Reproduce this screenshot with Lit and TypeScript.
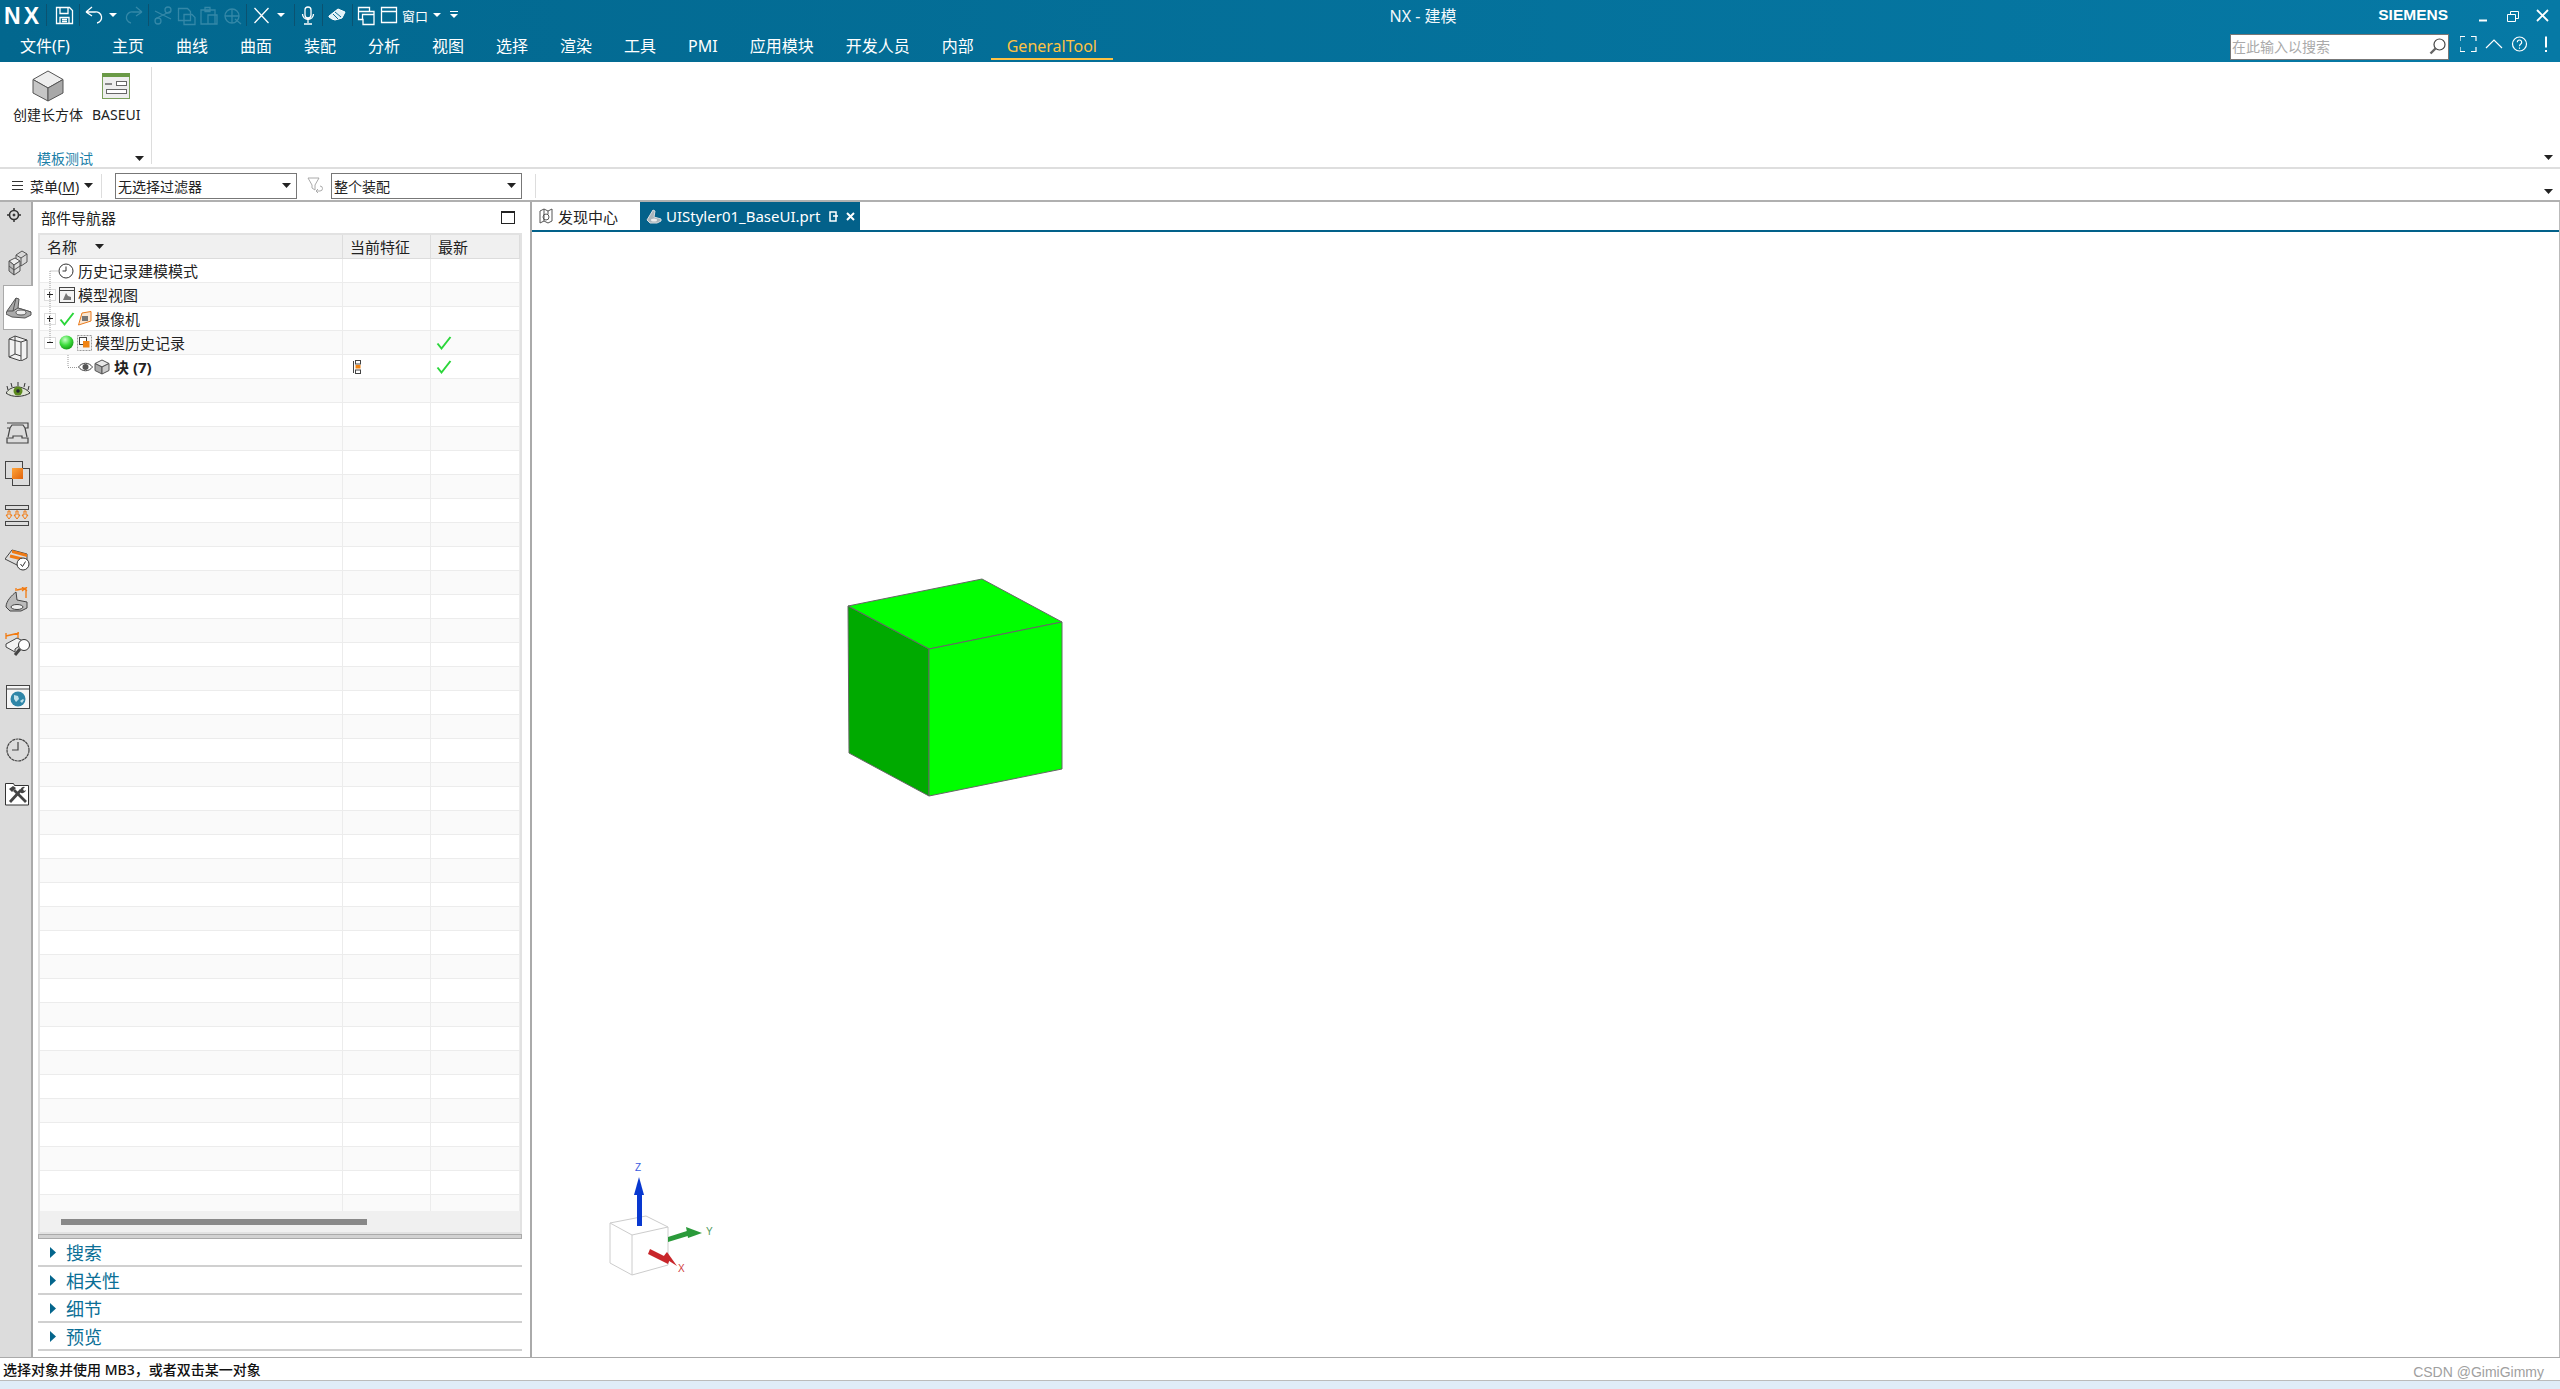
import { LitElement, html, css } from 'lit';
import { customElement } from 'lit/decorators.js';

const MENU = ['主页', '曲线', '曲面', '装配', '分析', '视图', '选择', '渲染', '工具', 'PMI', '应用模块', '开发人员', '内部'];
const SECTIONS = ['搜索', '相关性', '细节', '预览'];
const EMPTY_ROWS = Array.from({ length: 35 });

const arrow = html`<svg class="caret" width="9" height="5" viewBox="0 0 9 5"><path d="M0 0h9L4.500 5z" fill="currentColor"/></svg>`;
const tick = html`<svg class="ico" width="16" height="16" viewBox="0 0 16 16"><path d="M1.500 8.500l4 5L14.500 2" fill="none" stroke="#2bd63a" stroke-width="2"/></svg>`;

const quickBar = html`<svg width="470" height="34" viewBox="0 0 470 34">
  <text x="4" y="24" font-family="Liberation Sans" font-weight="700" font-size="23" fill="#fff" textLength="35">NX</text>
  <g stroke="#0b5270" stroke-width="1">
    <path d="M46.500 4v22M79.500 4v22M148.500 4v22M246.500 4v22M294.500 4v22M322.500 4v22M352.500 4v22"/>
  </g>
  <g fill="none" stroke="#fff" stroke-width="1.300">
    <path d="M56.500 7.500h13l3 3v13h-16zM60 7.500v6h8v-6M60 23.500v-6h9v6M62 19.500h5M62 21.500h5"/>
    <path d="M86 12l6-5M86 12l6 4M86 12h9a5.500 5.500 0 0 1 2 11"/>
    <path d="M254.500 8l14 15M268.500 8l-14 15"/>
    <path d="M305 10a3 3 0 0 1 6 0v5a3 3 0 0 1-6 0zM302.500 14a5.500 5.500 0 0 0 11 0M308 20v3M304 24h8"/>
    <path d="M358.500 7.500h11v4h4.500v13h-11v-5h-4.500zM358.500 11.500h11M362.500 19.500v-5h11.500"/>
    <path d="M381.500 7.500h15v15h-15zM381.500 11.500h15"/>
  </g>
  <path d="M329 16l9-7 7 3-3 6-7 2-3-1-3-2z" fill="#dff1f7" stroke="#fff"/>
  <path d="M335 12l6 5M333 14l5 5" stroke="#0b6a90" stroke-width="1"/>
  <g fill="none" stroke="#3488a8" stroke-width="1.300">
    <path d="M142 12l-6-5M142 12l-6 4M142 12h-9a5.500 5.500 0 0 0-2 11"/>
    <path d="M155 11l16 8M171 11l-16 8"/><circle cx="158" cy="21" r="3"/><circle cx="168" cy="10" r="3"/>
    <path d="M178.500 8.500h9l3 3v9h-12zM184 14.500h8l3 3v7h-11z"/>
    <path d="M204 10h11v14h-14v-14zM205 7.500h5v4h-5zM208 15h9v9h-9z"/>
    <circle cx="232" cy="16" r="7"/><path d="M225 16h14M232 9v14M235 19l6 5"/>
  </g>
  <text x="402" y="21" font-family="Noto Sans CJK SC" font-size="13" fill="#fff">窗口</text>
  <g fill="#fff">
    <path d="M109 13h8l-4 4zM277 13h8l-4 4zM433 13h8l-4 4zM450 14h8l-4 4zM450 11h8v1h-8z"/>
  </g>
</svg>`;

const winButtons = html`<svg width="70" height="24" viewBox="0 0 70 24">
  <g fill="none" stroke="#fff">
    <path d="M0 19.500h8" stroke-width="2"/>
    <path d="M28.500 13.500h8v7h-8zM31.500 13v-2.500h8v7h-3"/>
    <path d="M58 9l11 11M69 9l-11 11" stroke-width="1.800"/>
  </g>
</svg>`;

const searchIcons = html`<svg width="92" height="22" viewBox="0 0 92 22">
  <g fill="none" stroke="#fff" stroke-width="1.200">
    <path d="M0 5V.5h5M11 .5h5V5M16 11v4.500h-5M5 15.500H0V11"/>
    <path d="M26 12l8-8 8 8"/>
    <circle cx="59.500" cy="8" r="7"/>
    <path d="M57.300 6.200a2.200 2.200 0 1 1 3.500 1.800c-1 .7-1.300 1-1.300 2.200M59.500 11.500v1.200"/>
    <path d="M86 .5v11M86 14v2" stroke-width="2"/>
  </g>
</svg>`;

const sideIcons = [
  html`<svg width="16" height="16" viewBox="0 0 16 16" fill="none" stroke="#333"><circle cx="8" cy="8" r="4.500" stroke-width="1.600"/><circle cx="8" cy="8" r="1" fill="#333"/><path d="M8 1v2M8 13v2M1 8h2M13 8h2" stroke-width="1.500"/></svg>`,
  html`<svg width="20" height="26" viewBox="0 0 20 26" stroke="#555"><path d="M8 5l6-4 5 3v8l-6 4-5-3z" fill="#d8d8d8"/><path d="M8 5l5 3 6-4M13 8v8" fill="none"/><path d="M1 11l6-3 5 3-6 4z" fill="#eee"/><path d="M1 11l5 4v10l-5-4z" fill="#bbb"/><path d="M6 15l6-4v10l-6 4z" fill="#ddd"/><path d="M1 16l5 4 6-4" fill="none"/></svg>`,
  html`<svg width="26" height="26" viewBox="0 0 26 26" stroke="#555"><path d="M1 17L10 4l3 1-1 9 13 4v3l-6 3-13-1-6-3z" fill="#aaa"/><path d="M10 4l-3 13-6 0" fill="none"/><path d="M7 17l5-3 13 4" fill="#ccc"/><ellipse cx="15" cy="18.500" rx="5" ry="2.500" fill="#eee"/></svg>`,
  html`<svg width="20" height="26" viewBox="0 0 20 26" fill="#f2f2f2" stroke="#444"><path d="M1 4l6-3 12 4v18l-6 3-12-4z"/><path d="M7 1v18l-6 3M13 7v19M1 4l12 3 6-2M7 19l6 2" fill="none"/></svg>`,
  html`<svg width="24" height="16" viewBox="0 0 24 16"><path d="M0 11C5 3 17 3 24 11c-6 4-18 5-24 0z" fill="#dfe4d5" stroke="#333"/><circle cx="12" cy="9" r="4.500" fill="#5c8a1e"/><circle cx="12" cy="9" r="1.800" fill="#223"/><path d="M2 8L1 4M6 5L5 1M12 4V0M18 5l1-4M22 8l1-4" stroke="#333"/></svg>`,
  html`<svg width="24" height="22" viewBox="0 0 24 22" fill="none" stroke="#444" stroke-width="1.200"><path d="M1 1h21v5h-3l2 9M1 6h3l-2 9M4 6l2-3h11l2 3"/><path d="M1 16h6v-2h9v2h6v5h-21z"/></svg>`,
  html`<svg width="26" height="26" viewBox="0 0 26 26"><defs><linearGradient id="og" x1="0" y1="0" x2="1" y2="1"><stop offset="0" stop-color="#ffa53a"/><stop offset="1" stop-color="#e0620a"/></linearGradient></defs><rect x="7.500" y="7.500" width="17" height="17" fill="none" stroke="#444"/><rect x=".5" y=".5" width="17" height="17" fill="none" stroke="#444"/><rect x="7" y="7" width="11" height="11" fill="url(#og)"/></svg>`,
  html`<svg width="26" height="22" viewBox="0 0 26 22"><g fill="none" stroke="#444"><rect x=".5" y=".5" width="23" height="4"/><rect x=".5" y="16.500" width="23" height="4"/></g><path d="M3 6v4H1l3 4 3-4H5V6zM11 6v4H9l3 4 3-4h-2V6zM19 6v4h-2l3 4 3-4h-2V6z" fill="none" stroke="#f27a10"/></svg>`,
  html`<svg width="26" height="26" viewBox="0 0 26 26"><path d="M0 14l7-9 15 4v9l-8 3z" fill="#ddd" stroke="#444"/><path d="M7 5l15 4 0 3-15-4z" fill="#f07a14"/><path d="M5 11l12 3" stroke="#f07a14" stroke-width="3"/><circle cx="18" cy="19" r="6" fill="#fff" stroke="#333"/><path d="M15.500 19l2 2.500 3-5" fill="none" stroke="#333"/></svg>`,
  html`<svg width="26" height="26" viewBox="0 0 26 26"><path d="M1 20c0-6 6-12 10-15l1 8 10 2v6l-6 3H5z" fill="#bbb" stroke="#444"/><ellipse cx="12" cy="20" rx="6" ry="2.500" fill="#eee" stroke="#444"/><path d="M11 1v3M12 3l9-2M21 1v10M17 0l5 4M22 0l-5 4" fill="none" stroke="#f27a10" stroke-width="1.300"/></svg>`,
  html`<svg width="26" height="26" viewBox="0 0 26 26"><path d="M1 12l11-6 8 4-10 7v3L1 15z" fill="#f4f4f4" stroke="#444"/><path d="M1 1v6M1 4l13-3M13 0v6" fill="none" stroke="#f27a10" stroke-width="1.300"/><path d="M15 17l-5 6" stroke="#444" stroke-width="3"/><circle cx="19" cy="13" r="5.500" fill="#fff" stroke="#333"/></svg>`,
  html`<svg width="24" height="24" viewBox="0 0 24 24"><rect x=".5" y=".5" width="23" height="23" fill="#f6f6f6" stroke="#444"/><path d="M1 4h22" stroke="#444"/><circle cx="12" cy="14" r="7.500" fill="#2f86a8"/><path d="M8 10l4 1 1 3-3 3-2-3zM14 16l3-2 1 1-2 3z" fill="#bfe0ea"/></svg>`,
  html`<svg width="24" height="24" viewBox="0 0 24 24" fill="none" stroke="#444" stroke-width="1.200"><circle cx="12" cy="12" r="11" stroke-dasharray="3 .5"/><path d="M12 4v8H6"/></svg>`,
  html`<svg width="26" height="26" viewBox="0 0 26 26"><path d="M.5 25V3.500h8l1 2h14V25z" fill="#fff" stroke="#333"/><path d="M5 22L16 10M9 10l12 12" stroke="#444" stroke-width="2.800"/><path d="M15 11a4 4 0 0 1 5-4l-2 2 1 2 2-1a4 4 0 0 1-5 3z" fill="#444"/><path d="M4 9l4-3 3 2-4 4z" fill="#444"/></svg>`,
];
const SIDE_CENTERS = [215, 263, 307, 348, 390, 433, 474, 516, 558, 600, 645, 697, 750, 793];

const clockIcon = html`<svg class="ico" width="16" height="16" viewBox="0 0 16 16" fill="none" stroke="#333"><circle cx="8" cy="8" r="7" fill="#fff"/><path d="M8 3.500V8H4.500"/></svg>`;
const viewIcon = html`<svg class="ico" width="16" height="16" viewBox="0 0 16 16"><rect x=".5" y=".5" width="15" height="15" fill="#f4f4f4" stroke="#444"/><path d="M1 3.500h14" stroke="#444"/><path d="M4 13l3-7 2 3 3 1v3z" fill="#777"/></svg>`;
const cameraIcon = html`<svg class="ico" width="14" height="16" viewBox="0 0 14 16"><path d="M.5 14L4 2l9-1.500V10z" fill="#fbe7d2" stroke="#e8791a"/><rect x="4" y="5" width="6" height="5" fill="#777"/></svg>`;
const ballIcon = html`<svg class="ico" width="15" height="15" viewBox="0 0 15 15"><defs><radialGradient id="gb" cx=".4" cy=".3" r=".8"><stop offset="0" stop-color="#c8ffc8"/><stop offset=".5" stop-color="#3cdc3c"/><stop offset="1" stop-color="#0c8a0c"/></radialGradient></defs><circle cx="7.500" cy="7.500" r="7" fill="url(#gb)"/></svg>`;
const historyIcon = html`<svg class="ico" width="15" height="16" viewBox="0 0 15 16"><rect x=".5" y=".5" width="14" height="15" fill="#f4f4f4" stroke="#999" stroke-dasharray="2 1"/><rect x="2.500" y="2.500" width="7" height="7" fill="#fff" stroke="#444"/><rect x="6" y="6" width="6.500" height="6.500" fill="#f08414"/></svg>`;
const eyeIcon = html`<svg class="ico" width="15" height="12" viewBox="0 0 15 12"><path d="M.5 6C4 1 11 1 14.500 6 11 11 4 11 .5 6z" fill="#fff" stroke="#444"/><circle cx="7.500" cy="6" r="3" fill="#555"/></svg>`;
const cubeIcon = html`<svg class="ico" width="16" height="16" viewBox="0 0 16 16" stroke="#555"><path d="M8 1l7 3.500-7 3.500-7-3.500z" fill="#e8e8e8"/><path d="M1 4.500L8 8v7l-7-3.500z" fill="#aaa"/><path d="M15 4.500L8 8v7l7-3.500z" fill="#ccc"/></svg>`;
const featureIcon = html`<svg class="ico" width="9" height="14" viewBox="0 0 9 14"><path d="M1.500 1v12" stroke="#444"/><rect x="3.500" y=".5" width="5" height="3.500" fill="#fff" stroke="#444"/><rect x="3.500" y="5" width="5" height="3.500" fill="#f08414"/><rect x="3.500" y="10" width="5" height="3.500" fill="#fff" stroke="#444"/></svg>`;

@customElement('app-root')
export class AppRoot extends LitElement {
  static styles = css`
    :host {
      display: block;
      width: 2560px;
      height: 1389px;
      overflow: hidden;
      font-family: "Noto Sans", "Noto Sans CJK SC", sans-serif;
      font-size: 14px;
      color: #222;
    }

    :host * {
      box-sizing: border-box;
    }

    svg {
      display: block;
      flex: none;
    }

    .root {
      display: flex;
      flex-direction: column;
      height: 100%;
      background: #fff;
    }

    .header {
      height: 62px;
      flex: none;
      background: linear-gradient(90deg, #02678e, #0679a5);
      color: #fff;
    }

    .title-row {
      display: flex;
      align-items: center;
      height: 34px;
    }

    .doc-title {
      width: 1906px;
      text-align: center;
      font-size: 16px;
      color: #f2f8fb;
      margin-top: -4px;
    }

    .siemens {
      margin-left: auto;
      font-family: "Liberation Sans", sans-serif;
      font-weight: 700;
      font-size: 15.500px;
      margin-top: -4px;
    }

    .win-buttons {
      margin: -8px 11px 0 31px;
    }

    .menu-row {
      display: flex;
      align-items: center;
      height: 24px;
      padding-left: 20px;
      gap: 32px;
      font-size: 16px;
      line-height: 24px;
    }

    .menu-row .file {
      margin-right: 10px;
    }

    .menu-row .active {
      position: relative;
      margin-left: 1px;
      color: #fdc244;
    }

    .menu-row .active::after {
      content: '';
      position: absolute;
      left: -16px;
      right: -16px;
      top: 24px;
      height: 2px;
      background: #fdc244;
    }

    .menu-right {
      display: flex;
      align-items: center;
      margin-left: auto;
      margin-right: 8px;
    }

    .search {
      display: flex;
      align-items: center;
      justify-content: space-between;
      width: 219px;
      height: 26px;
      margin-top: 1px;
      background: #fff;
      border: 1px solid #777;
      color: #aaa;
      font-size: 14px;
      padding: 0 2px 0 1px;
    }

    .search-icons {
      margin-left: 11px;
      margin-top: 2px;
    }

    .ribbon {
      display: flex;
      height: 107px;
      flex: none;
      border-bottom: 2px solid #dedede;
    }

    .group {
      display: flex;
      flex-direction: column;
      width: 152px;
      margin: 5px 0 3px;
      border-right: 1px solid #ddd;
    }

    .tools {
      display: flex;
      flex: 1;
      padding-left: 13px;
      gap: 9px;
    }

    .tool {
      display: flex;
      flex-direction: column;
      align-items: center;
      font-size: 14px;
    }

    .tool .pic {
      height: 38px;
      display: flex;
      align-items: center;
    }

    .tool span {
      margin-top: 1px;
      line-height: 18px;
    }

    .group-label {
      display: flex;
      align-items: center;
      padding: 12px 0 0 37px;
      height: 24px;
      font-size: 14px;
      color: #1b80a8;
    }

    .group-label .caret {
      margin-left: 42px;
      color: #222;
    }

    .far-caret {
      margin: auto 7px 0 auto;
      padding-bottom: 7px;
      color: #222;
    }

    .toolbar {
      display: flex;
      align-items: center;
      height: 33px;
      flex: none;
      border-bottom: 2px solid #b0b0b0;
      padding: 2px 0 0 12px;
      font-size: 14px;
    }

    .burger {
      margin-right: 7px;
    }

    .menu-btn u {
      text-underline-offset: 2px;
    }

    .toolbar .caret {
      margin-left: 5px;
    }

    .vsep {
      width: 1px;
      height: 24px;
      background: #ddd;
    }

    .combo {
      display: flex;
      align-items: center;
      justify-content: space-between;
      height: 26px;
      border: 1px solid #777;
      padding: 0 5px 0 2px;
    }

    .combo.wide {
      width: 182px;
      margin-left: 13px;
    }

    .combo.narrow {
      width: 191px;
    }

    .filter {
      margin: 0 8px 0 10px;
    }

    .body {
      display: flex;
      flex: 1;
      min-height: 0;
    }

    .side {
      width: 33px;
      flex: none;
      background: #dcdcdc;
      border-right: 2px solid #aaa;
    }

    .side-cell {
      display: flex;
      align-items: center;
      justify-content: center;
      padding-left: 5px;
    }

    .side-cell.first {
      padding-left: 0;
      padding-right: 3px;
    }

    .side-cell.on {
      margin-left: 3px;
      margin-right: -2px;
      padding-left: 0;
      background: #fff;
      border: solid #aaa;
      border-width: 1px 0 1px 1px;
    }

    .panel {
      display: flex;
      flex-direction: column;
      width: 499px;
      flex: none;
      padding: 0 8px 6px 5px;
      border-right: 2px solid #aaa;
    }

    .panel-head {
      display: flex;
      align-items: center;
      justify-content: space-between;
      height: 31px;
      flex: none;
      padding: 0 7px 0 3px;
      font-size: 15px;
    }

    .max-box {
      width: 14px;
      height: 13px;
      border: 1.500px solid #222;
      border-top-width: 2px;
    }

    .tree {
      display: flex;
      flex-direction: column;
      flex: 1;
      min-height: 0;
      border: 2px solid #e2e2e2;
    }

    .cols {
      display: grid;
      grid-template-columns: 303px 88px 1fr;
      font-size: 15px;
    }

    .cols > div {
      display: flex;
      align-items: center;
      border-right: 1px solid #ececec;
    }

    .tree-head {
      height: 24px;
      flex: none;
      background: #f0f0f0;
      border-bottom: 1px solid #dcdcdc;
    }

    .tree-head > div {
      padding-left: 7px;
      border-right-color: #ddd;
    }

    .tree-head .caret {
      margin-left: 18px;
      color: #222;
    }

    .rows {
      position: relative;
      flex: 1;
      min-height: 0;
      overflow: hidden;
    }

    .wires {
      position: absolute;
      left: 0;
      top: 0;
    }

    .row {
      height: 24px;
      border-bottom: 1px solid #ececec;
    }

    .row:nth-child(even) {
      background: #fafafa;
    }

    .row .name {
      padding-left: 4px;
      gap: 3px;
    }

    .row .plain {
      padding-left: 18px;
    }

    .row .plain span {
      margin-left: 1px;
    }

    .row .deep {
      padding-left: 38px;
      gap: 1px;
    }

    .row .deep span {
      font-weight: 700;
      margin-left: 3px;
    }

    .row .num {
      padding-left: 9px;
    }

    .row .ok {
      padding-left: 5px;
    }

    .expander {
      position: relative;
      width: 12px;
      height: 12px;
      flex: none;
      background: #fff;
      border: 1px solid #ddd;
    }

    .expander::before {
      content: '';
      position: absolute;
      left: 2px;
      right: 2px;
      top: 4px;
      height: 1px;
      background: #222;
    }

    .expander.closed::after {
      content: '';
      position: absolute;
      top: 2px;
      bottom: 2px;
      left: 4px;
      width: 1px;
      background: #222;
    }

    .scroll {
      height: 21px;
      flex: none;
      display: flex;
      align-items: center;
      padding-left: 21px;
      background: #f0f0f0;
    }

    .thumb {
      width: 306px;
      height: 6px;
      background: #888;
    }

    .splitter {
      height: 5px;
      flex: none;
      background: #d2d2d2;
      border: 1px solid #aaa;
    }

    .section {
      display: flex;
      align-items: center;
      height: 28px;
      flex: none;
      padding-left: 12px;
      gap: 10px;
      color: #0b6f96;
      font-size: 18px;
      border-bottom: 2px solid #d0d0d0;
    }

    .view {
      display: flex;
      flex-direction: column;
      flex: 1;
      min-width: 0;
      border-right: 1px solid #bbb;
    }

    .view-tabs {
      display: flex;
      align-items: center;
      height: 30px;
      flex: none;
      border-bottom: 2px solid #02618a;
      padding-left: 7px;
      font-size: 15px;
    }

    .view-tab {
      display: flex;
      align-items: center;
      gap: 5px;
      width: 101px;
    }

    .view-tab.on {
      width: 220px;
      height: 28px;
      gap: 4px;
      padding-left: 6px;
      background: #03618a;
      color: #fff;
    }

    .view-tab.on .doc {
      margin-left: 5px;
    }

    .view-tab.on .close {
      margin-left: 3px;
    }

    .canvas {
      position: relative;
      flex: 1;
      min-height: 0;
    }

    .canvas svg {
      position: absolute;
      left: 0;
      top: 0;
    }

    .status {
      display: flex;
      align-items: center;
      justify-content: space-between;
      height: 24px;
      flex: none;
      padding: 0 16px 0 3px;
      border-top: 1px solid #aaa;
      border-bottom: 1px solid #bbb;
      font-size: 14px;
      font-weight: 500;
      color: #111;
    }

    .mark {
      font-family: "Liberation Sans", sans-serif;
      font-size: 14px;
      font-weight: 400;
      color: #a0a0a0;
      padding-top: 6px;
    }

    .strip {
      height: 8px;
      flex: none;
      background: #e0ecf8;
    }
  `;

  renderHeader() {
    return html`
      <header class="header">
        <div class="title-row">
          ${quickBar}
          <div class="doc-title">NX - 建模</div>
          <div class="siemens">SIEMENS</div>
          <div class="win-buttons">${winButtons}</div>
        </div>
        <nav class="menu-row">
          <span class="file">文件(F)</span>
          ${MENU.map((m) => html`<span>${m}</span>`)}
          <span class="active">GeneralTool</span>
          <div class="menu-right">
            <div class="search">
              <span>在此输入以搜索</span>
              <svg width="17" height="17" viewBox="0 0 17 17"><circle cx="10.500" cy="6.500" r="5.500" fill="#fff" stroke="#444" stroke-width="1.200"/><path d="M6.500 10.500l-5 5" stroke="#666" stroke-width="2.400"/></svg>
            </div>
            <div class="search-icons">${searchIcons}</div>
          </div>
        </nav>
      </header>
    `;
  }

  renderRibbon() {
    return html`
      <section class="ribbon">
        <div class="group">
          <div class="tools">
            <div class="tool">
              <div class="pic">
                <svg width="32" height="32" viewBox="0 0 32 32" stroke="#555"><path d="M16 1l15 8.500-15 8.500L1 9.500z" fill="#eee"/><path d="M1 9.500l15 8.500v13L1 23z" fill="#c6c6c6"/><path d="M31 9.500L16 18v13l15-8z" fill="#a8a8a8"/></svg>
              </div>
              <span>创建长方体</span>
            </div>
            <div class="tool">
              <div class="pic">
                <svg width="28" height="26" viewBox="0 0 28 26"><rect x=".5" y=".5" width="27" height="25" fill="#eee" stroke="#7ba05b"/><rect x="0" y="0" width="28" height="4" fill="#6a9a46"/><path d="M3 11h7" stroke="#888" stroke-width="2"/><rect x="14.500" y="8.500" width="10" height="4" fill="#fff" stroke="#666"/><rect x="4.500" y="16.500" width="20" height="4" fill="#fff" stroke="#666"/></svg>
              </div>
              <span>BASEUI</span>
            </div>
          </div>
          <div class="group-label"><span>模板测试</span>${arrow}</div>
        </div>
        <div class="far-caret">${arrow}</div>
      </section>
    `;
  }

  renderToolbar() {
    return html`
      <section class="toolbar">
        <svg class="burger" width="11" height="9" viewBox="0 0 11 9"><path d="M0 .5h11M0 4.500h11M0 8.500h11" stroke="#333"/></svg>
        <span class="menu-btn">菜单(<u>M</u>)</span>
        ${arrow}
        <div class="vsep" style="margin-left: 8px"></div>
        <div class="combo wide"><span>无选择过滤器</span>${arrow}</div>
        <svg class="filter" width="16" height="17" viewBox="0 0 16 17" fill="none" stroke="#aaa"><path d="M1 1h11L8 8v5L5 11V8z"/><path d="M9 14h4a2.500 2.500 0 0 0 0-5M9 14l2-2M9 14l2 2"/></svg>
        <div class="combo narrow"><span>整个装配</span>${arrow}</div>
        <div class="vsep" style="margin-left: 13px"></div>
        <div class="far-caret" style="padding-bottom: 0; margin-top: auto; margin-bottom: 6px">${arrow}</div>
      </section>
    `;
  }

  renderSide() {
    let bottom = 202;
    return html`
      <aside class="side">
        ${sideIcons.map((icon, i) => {
          const h = i === 2 ? 45 : 30;
          const top = SIDE_CENTERS[i] - h / 2;
          const gap = top - bottom;
          bottom = top + h;
          const cls = i === 0 ? 'first' : i === 2 ? 'on' : '';
          return html`<div class="side-cell ${cls}" style="height: ${h}px; margin-top: ${gap}px">${icon}</div>`;
        })}
      </aside>
    `;
  }

  renderTree() {
    return html`
      <div class="tree">
        <div class="cols tree-head">
          <div>名称 ${arrow}</div>
          <div>当前特征</div>
          <div>最新</div>
        </div>
        <div class="rows">
          <div class="cols row">
            <div class="name plain">${clockIcon}<span>历史记录建模模式</span></div><div></div><div></div>
          </div>
          <div class="cols row">
            <div class="name"><i class="expander closed"></i>${viewIcon}<span>模型视图</span></div><div></div><div></div>
          </div>
          <div class="cols row">
            <div class="name"><i class="expander closed"></i>${tick}${cameraIcon}<span>摄像机</span></div><div></div><div></div>
          </div>
          <div class="cols row">
            <div class="name"><i class="expander"></i>${ballIcon}${historyIcon}<span>模型历史记录</span></div><div></div><div class="ok">${tick}</div>
          </div>
          <div class="cols row">
            <div class="name deep">${eyeIcon}${cubeIcon}<span>块 (7)</span></div><div class="num">${featureIcon}</div><div class="ok">${tick}</div>
          </div>
          ${EMPTY_ROWS.map(() => html`<div class="cols row"><div></div><div></div><div></div></div>`)}
          <svg class="wires" width="60" height="120" viewBox="0 0 60 120" fill="none" stroke="#999" stroke-dasharray="1 1">
            <path d="M10 12v72M10.500 12h8M28 96v12M28 108.500h10"/>
          </svg>
        </div>
        <div class="scroll"><div class="thumb"></div></div>
      </div>
    `;
  }

  renderPanel() {
    return html`
      <section class="panel">
        <div class="panel-head"><span>部件导航器</span><div class="max-box"></div></div>
        ${this.renderTree()}
        <div class="splitter"></div>
        ${SECTIONS.map((s) => html`
          <div class="section">
            <svg width="6" height="11" viewBox="0 0 6 11"><path d="M0 0l6 5.500L0 11z" fill="#04658c"/></svg>
            <span>${s}</span>
          </div>
        `)}
      </section>
    `;
  }

  renderView() {
    return html`
      <section class="view">
        <div class="view-tabs">
          <div class="view-tab">
            <svg width="14" height="16" viewBox="0 0 14 16" fill="none" stroke="#555"><path d="M1 3l4-2 4 2 4-2v12l-4 2-4-2-4 2z"/><circle cx="7" cy="9" r="3"/><path d="M5 1v12M9 3v3"/></svg>
            <span>发现中心</span>
          </div>
          <div class="view-tab on">
            <svg width="16" height="16" viewBox="0 0 16 16"><path d="M1 12L7 2l2 1-1 6 7 2v2l-4 2H4z" fill="#aab4ba" stroke="#d8dde0"/><ellipse cx="8" cy="12" rx="3" ry="1.500" fill="#eee"/></svg>
            <span>UIStyler01_BaseUI.prt</span>
            <svg class="doc" width="10" height="11" viewBox="0 0 10 11" fill="none" stroke="#fff" stroke-width="1.500"><path d="M1 1h6v9H1zM4 5h5"/></svg>
            <svg class="close" width="9" height="9" viewBox="0 0 9 9" stroke="#fff" stroke-width="2"><path d="M1 1l7 7M8 1L1 8"/></svg>
          </div>
        </div>
        <div class="canvas">
          <svg width="2027" height="1125" viewBox="532 232 2027 1125">
            <g stroke="#666" stroke-width="1" stroke-linejoin="round">
              <path d="M848 606L982 579 1062 622 929 649z" fill="#00ff00"/>
              <path d="M848 606L929 649V796L849 753z" fill="#00aa00"/>
              <path d="M929 649L1062 622V769L929 796z" fill="#00ff00"/>
            </g>
            <g fill="none" stroke="#ccc" stroke-width="1">
              <path d="M610 1223l36-7 22 11-36 8zM610 1223v40l22 12 36-10v-38M632 1235v40"/>
            </g>
            <path d="M637 1226v-33h5v33z" fill="#0838d0"/>
            <path d="M639 1177l-5 18h10z" fill="#0838d0"/>
            <path d="M668 1237l22-7 1 5-23 7z" fill="#2a9a3a"/>
            <path d="M702 1233l-16-6 2 11z" fill="#2a9a3a"/>
            <path d="M650 1249l20 10-2 5-20-10z" fill="#c8262a"/>
            <path d="M677 1266l-14-9 4-5z" fill="#c8262a"/>
            <g font-family="Liberation Sans" font-size="10">
              <text x="635" y="1171" fill="#3a5ce0">Z</text>
              <text x="706" y="1235" fill="#4f9a5a">Y</text>
              <text x="678" y="1272" fill="#d04040">X</text>
            </g>
          </svg>
        </div>
      </section>
    `;
  }

  render() {
    return html`
      <div class="root">
        ${this.renderHeader()}
        ${this.renderRibbon()}
        ${this.renderToolbar()}
        <main class="body">
          ${this.renderSide()}
          ${this.renderPanel()}
          ${this.renderView()}
        </main>
        <footer class="status">
          <span>选择对象并使用 MB3，或者双击某一对象</span>
          <span class="mark">CSDN @GimiGimmy</span>
        </footer>
        <div class="strip"></div>
      </div>
    `;
  }
}
